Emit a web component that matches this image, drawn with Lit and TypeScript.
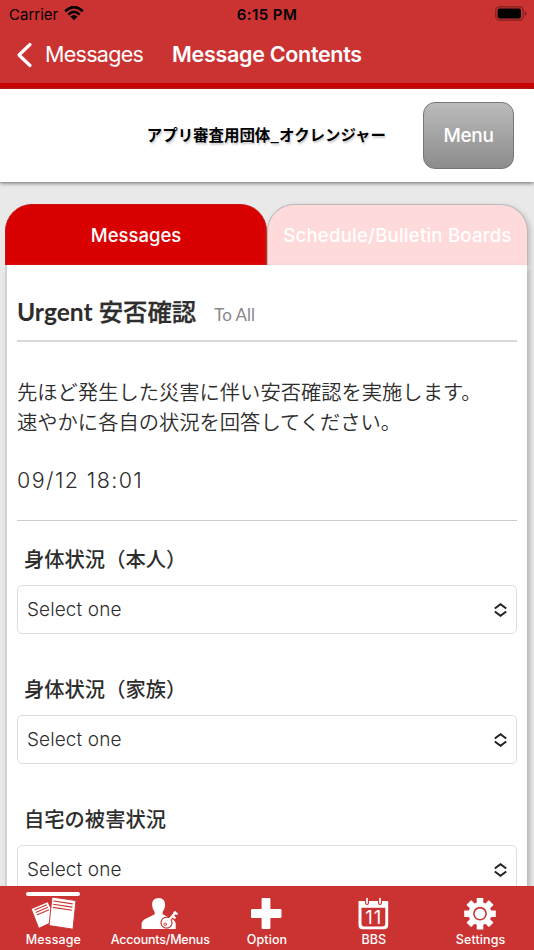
import { LitElement, html, svg, css } from "lit";
import { customElement } from "lit/decorators.js";

const QUESTIONS = ["身体状況（本人）", "身体状況（家族）", "自宅の被害状況"];

const ICONS = {
  message: svg`
    <path fill="#fff" d="M4.700 14 20.600 7.200 28.900 25 12 32.700Z"/>
    <path fill="#fff" stroke="#cb3333" stroke-width="1" d="M25 2 49 5.600 46 34.200 22 30.600Z"/>
    <path fill="none" stroke="#cb3333" stroke-width="1.100" d="M26.400 6 45.700 8.900M26.200 9.200 45.400 12.100M25.900 12.400 45 15.200M7.600 14.900 19.800 9.700M8.700 17.400 20.900 12.200M9.800 19.900 22 14.700"/>`,
  accounts: svg`
    <path fill="#fff" d="M24.700 3c4.400 0 6.600 3 6.400 7.300-.2 3.300-1.500 5.300-2.500 6.600v2.400l8.500 4.200q4.200 2 4.600 5v5.500H7.600v-5.500q.4-3 4.600-5l8.500-4.200v-2.400c-1-1.300-2.300-3.300-2.500-6.600C17.700 6 20.300 3 24.700 3Z"/>
    <g fill="none" stroke-linecap="round">
      <path stroke="#cb3333" stroke-width="4.500" d="M36 23.500 41 18.500"/>
      <circle cx="32.500" cy="27.700" r="5.500" fill="#fff" stroke="#cb3333" stroke-width="1.200"/>
      <path stroke="#fff" stroke-width="2.300" d="M35.500 24.200 41.500 17.500M38.700 20.700l2 2M40.500 17.500l2.300 1.200"/>
      <circle cx="31.200" cy="29.200" r="1.300" stroke="#cb3333" stroke-width=".9"/>
    </g>`,
  option: svg`<path fill="#fff" d="M22.800 3h6.400q1.200 0 1.200 1.200v9.900h9.900q1.200 0 1.200 1.200v6.400q0 1.200-1.200 1.200h-9.900v9.900q0 1.200-1.200 1.200h-6.400q-1.200 0-1.200-1.200v-9.900h-9.400q-1.200 0-1.200-1.200v-6.400q0-1.200 1.200-1.200h9.400V4.200Q21.600 3 22.800 3Z"/>`,
  bbs: svg`
    <path fill="#fff" fill-rule="evenodd" d="M11.500 6H41.200V30q0 4.200-4.200 4.200H15.700q-4.200 0-4.200-4.200ZM14.500 12.700V29q0 2.400 2.400 2.400h19q2.400 0 2.400-2.400V12.700Z"/>
    <path stroke="#cb3333" stroke-width="4" stroke-linecap="round" d="M20 4.500V8M33 4.500V8"/>
    <path stroke="#fff" stroke-width="1.700" stroke-linecap="round" d="M20 3.500V8M33 3.500V8"/>
    <text x="26.800" y="29" text-anchor="middle" fill="#fff" font-family="Inter, sans-serif" font-size="18.500" font-weight="400" letter-spacing="1">11</text>`,
  settings: svg`
    <g fill="#fff" transform="translate(26 18.700)">
      ${[0, 45, 90, 135].map(a => svg`<rect x="-3.300" y="-15.800" width="6.600" height="31.600" rx=".5" transform="rotate(${a})"/>`)}
      <circle r="11.500"/>
      <circle r="6.100" fill="none" stroke="#cb3333" stroke-width="1.600"/>
    </g>`,
};

@customElement("app-root")
export class AppRoot extends LitElement {
  static styles = css`
    :host { display: flex; flex-direction: column; width: 534px; height: 950px; overflow: hidden; background: #e9e9e9; color: #2d2d2d; font-family: Inter, "Noto Sans CJK JP", sans-serif; }
    * { box-sizing: border-box; }
    span, h1, h2, h3, p, button { white-space: nowrap; }
    h1, h2, h3, p { margin: 0; }
    svg { display: block; }
    .top { flex: none; height: 89px; background: #cb3333; border-bottom: 6px solid #c80000; }
    .status { height: 28px; display: grid; grid-template-columns: 1fr auto 1fr; align-items: center; padding: 0 7px 0 9px; color: #000; font-size: 15px; }
    .carrier { display: flex; align-items: center; gap: 6px; }
    .carrier svg { margin-top: -2px; }
    .time { font-weight: 600; letter-spacing: .45px; margin-right: 2px; }
    .battery { justify-self: end; margin-top: -2px; }
    .nav { height: 53px; display: flex; align-items: center; padding-left: 16px; color: #fff; font-size: 21.500px; }
    .nav span, .nav h1 { margin-top: -1px; }
    .nav .back { width: 128px; margin-left: 12px; letter-spacing: -.7px; }
    .nav h1 { font-size: 21.500px; font-weight: 600; letter-spacing: -.3px; margin-left: -1px; }
    .org { flex: none; z-index: 1; height: 93px; background: #fff; box-shadow: 0 1px 4px #666; display: flex; justify-content: flex-end; align-items: center; padding-right: 20px; }
    .org h2 { color: #000; font-size: 15.450px; font-weight: 700; font-family: "Noto Sans CJK JP", sans-serif; text-shadow: 1px 2px 2px #ccc; margin: -4px 37px 0 0; }
    .menu { width: 91px; height: 67px; border: 1px solid #777; border-radius: 12px; background: linear-gradient(#bbb, #8c8c8c); color: #fff; font: 500 19px Inter, sans-serif; padding: 0; letter-spacing: -.3px; }
    .tabs { flex: none; display: flex; height: 61px; margin: 22px 6px 0 5px; }
    .tab { display: flex; align-items: center; justify-content: center; border-radius: 27px 27px 0 0; font-size: 18.500px; font-weight: 500; color: #fff; }
    .active { width: 262px; background: #d80000; border: 1px solid #cc1111; border-bottom: 0; }
    .idle { width: 261px; background: #ffdada; border: 1px solid #bababa; border-bottom: 0; box-shadow: 2px 2px 5px #bbb; letter-spacing: .25px; }
    .panel { flex: 1; min-height: 0; overflow: hidden; width: 522px; margin-left: 5px; background: #fff; border-left: 2px solid #d3d3d3; box-shadow: 3px 3px 5px #b5b5b5; padding: 0 10px; }
    .heading { height: 77px; display: flex; align-items: baseline; padding-top: 28px; border-bottom: 2px solid #d8d8d8; }
    .heading h2 { font: 700 24.600px/36px Lato, sans-serif; }
    .heading .jp { font: 500 24.400px/36px "Noto Sans CJK JP", sans-serif; -webkit-text-stroke: .3px #2d2d2d; }
    .heading .to { font: 17px Lato, sans-serif; color: #888; margin-left: 18px; }
    .body { height: 179px; padding-top: 35px; border-bottom: 1px solid #ccc; font: 350 20.300px/29.600px "Noto Sans CJK JP", sans-serif; white-space: pre; }
    .date { font-family: Inter, sans-serif; font-size: 21.500px; font-weight: 300; letter-spacing: 1.400px; }
    .question { height: 130.200px; padding-top: 23px; }
    .question h3 { height: 41px; padding-left: 7px; font: 500 20.300px/28px "Noto Sans CJK JP", sans-serif; }
    .select { height: 49px; border: 1px solid #ddd; border-radius: 5px; display: flex; align-items: center; justify-content: space-between; padding: 0 9px; font-size: 19px; font-weight: 300; }
    .select span { letter-spacing: .1px; }
    .bar { flex: none; z-index: 1; height: 64px; background: #cb3333; display: grid; grid-template-columns: repeat(5, 1fr); color: #fff; }
    .item { display: flex; flex-direction: column; align-items: center; padding-top: 6px; font-size: 12.500px; line-height: 16px; font-weight: 500; letter-spacing: .1px; }
    .item:nth-child(2) { letter-spacing: -.2px; }
    .mark { width: 54px; height: 4px; flex: none; border-radius: 2px; margin-bottom: -1.500px; }
    .mark.on { background: #fff; }
    .item svg { margin-bottom: 1.500px; }
  `;

  render() {
    return html`
      <header class="top">
        <div class="status">
          <div class="carrier"><span>Carrier</span>
            <svg width="20" height="15" viewBox="0 0 20 15" fill="none" stroke="#000" stroke-width="2.600"><path d="M1.200 5.200Q10-3 18.800 5.200M4.300 8.600Q10 3.200 15.700 8.600"/><path fill="#000" stroke="none" d="M6.400 10.600Q10 7.600 13.600 10.600L10 14.200Z"/></svg>
          </div>
          <span class="time">6:15 PM</span>
          <svg class="battery" width="32" height="15" viewBox="0 0 32 15"><rect x=".8" y=".8" width="27.400" height="13.400" rx="3.600" fill="none" stroke="#7e2020" stroke-width="1.200"/><rect x="2.600" y="2.600" width="23.400" height="9.800" rx="1.800"/><path d="M29.800 5v5q1.700-.7 1.700-2.500T29.800 5Z" fill="#7e2020"/></svg>
        </div>
        <div class="nav">
          <svg width="17" height="26" viewBox="0 0 17 26" fill="none" stroke="#fff" stroke-width="3.200" stroke-linecap="round" stroke-linejoin="round"><path d="M14 2.500 3 13 14 23.500"/></svg>
          <span class="back">Messages</span><h1>Message Contents</h1>
        </div>
      </header>
      <div class="org"><h2>アプリ審査用団体_オクレンジャー</h2><button class="menu">Menu</button></div>
      <div class="tabs"><div class="tab active"><span>Messages</span></div><div class="tab idle"><span>Schedule/Bulletin Boards</span></div></div>
      <main class="panel">
        <div class="heading"><h2>Urgent <span class="jp">安否確認</span></h2><span class="to">To All</span></div>
        <div class="body"><p>先ほど発生した災害に伴い安否確認を実施します。</p><p>速やかに各自の状況を回答してください。</p><p>&nbsp;</p><p class="date">09/12 18:01</p></div>
        ${QUESTIONS.map(q => html`<section class="question"><h3>${q}</h3><div class="select"><span>Select one</span>
          <svg width="13" height="14" viewBox="0 0 13 14" fill="none" stroke="#222" stroke-width="2"><path d="M.8 5.500 6.500 1.200 12.200 5.500M.8 8.500 6.500 12.800 12.200 8.500"/></svg></div></section>`)}
      </main>
      <nav class="bar">
        ${this.item("Message", ICONS.message, true)}${this.item("Accounts/Menus", ICONS.accounts)}${this.item("Option", ICONS.option)}${this.item("BBS", ICONS.bbs)}${this.item("Settings", ICONS.settings)}
      </nav>`;
  }

  private item(label: string, icon: unknown, on = false) {
    return html`<div class="item"><div class="mark ${on ? "on" : ""}"></div><svg width="53" height="36" viewBox="0 0 53 36">${icon}</svg><span>${label}</span></div>`;
  }
}
